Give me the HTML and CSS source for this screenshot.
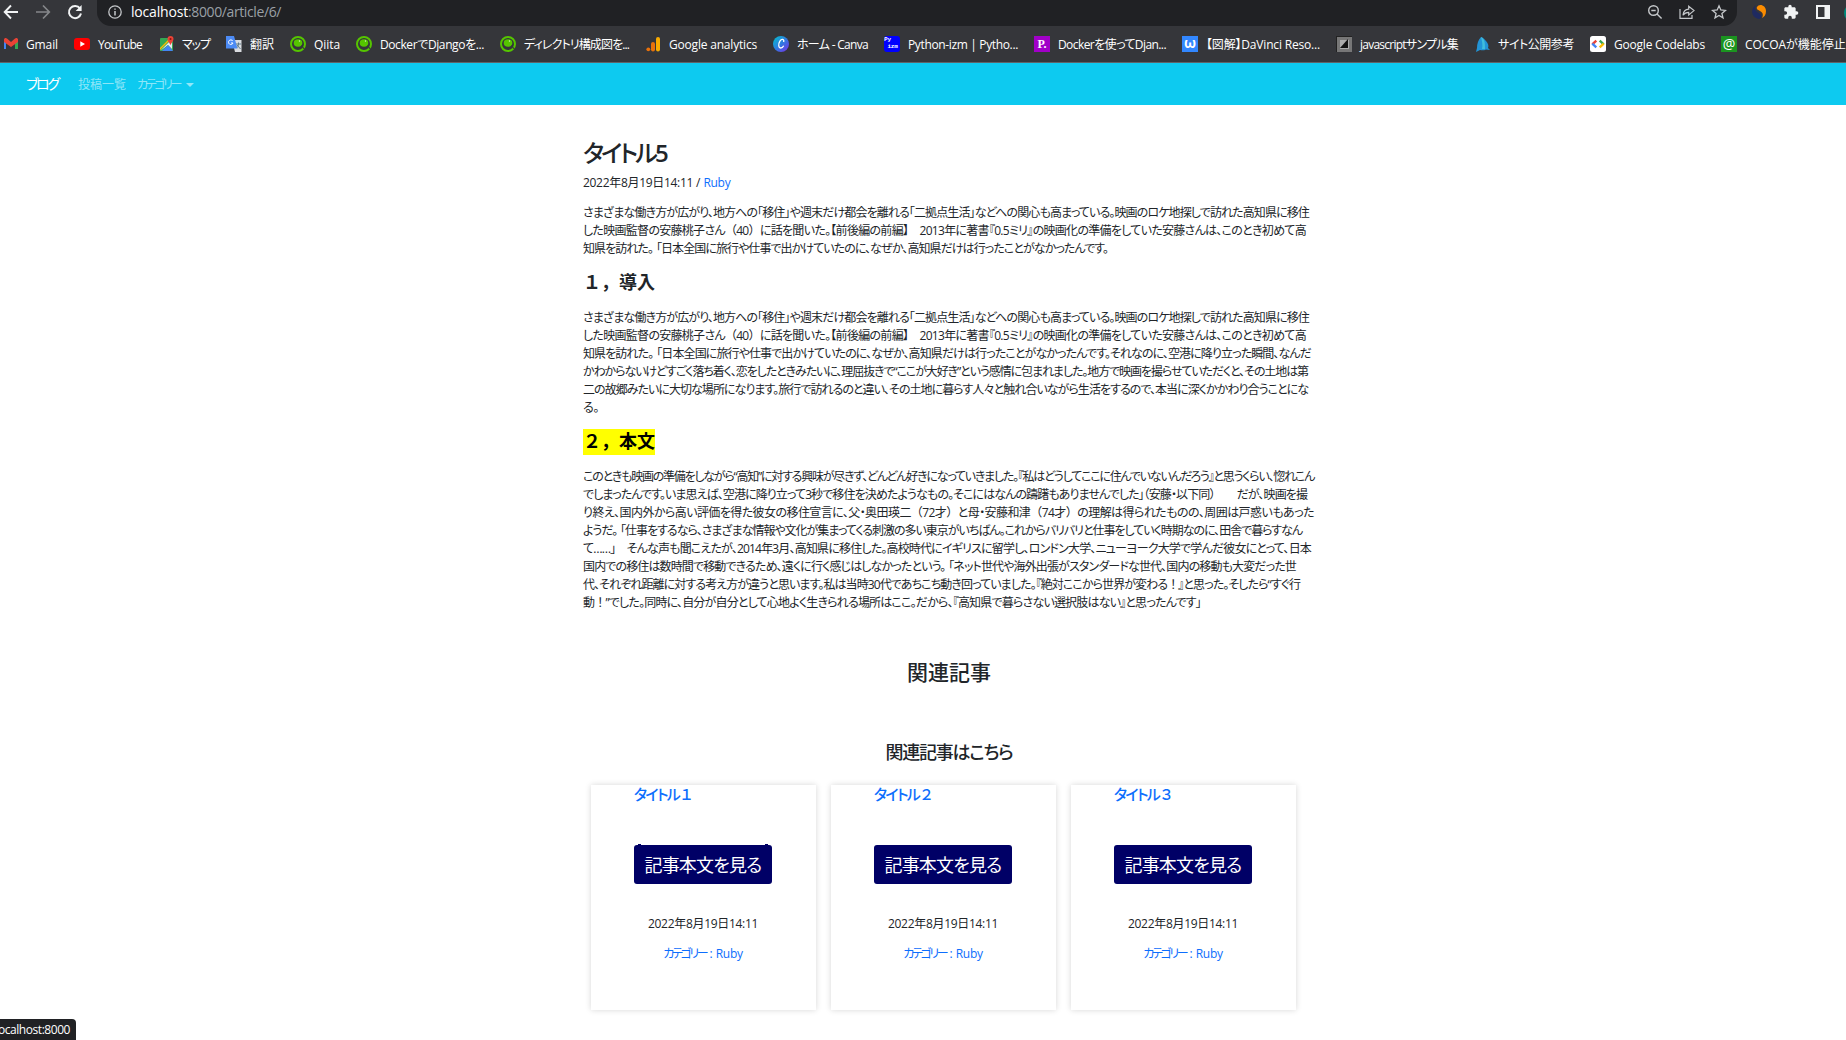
FILE: index.html
```html
<!DOCTYPE html>
<html lang="ja">
<head>
    <meta charset="UTF-8">
    <meta name="viewport" content="width=device-width, initial-scale=1.0">
    <title>タイトル5</title>
    <link rel="stylesheet" href="styles.css">
</head>
<body>
    <header class="browser">
        <div class="toolbar">
            <div class="nav-buttons">
                <svg width="16" height="16" viewBox="0 0 16 16" fill="none" stroke="#f1f3f4" stroke-width="1.9"><path d="M15 8H2M8 1.5L1.7 8L8 14.5"/></svg>
                <svg width="16" height="16" viewBox="0 0 16 16" fill="none" stroke="#85878a" stroke-width="1.7"><path d="M1 8h13M8 1.5L14.3 8L8 14.5"/></svg>
                <svg width="16" height="16" viewBox="0 0 16 16"><path d="M13 4.4A6.1 6.1 0 1 0 14 9.5" fill="none" stroke="#f1f3f4" stroke-width="2"/><path d="M14.6 1v6H8.6z" fill="#f1f3f4"/></svg>
            </div>
            <div class="omnibox">
                <svg width="14" height="14" viewBox="0 0 14 14" fill="none" stroke="#c4c7ca" stroke-width="1.3"><circle cx="7" cy="7" r="6.2"/><path d="M7 6v4.4M7 3.4v1.4" stroke-width="1.5"/></svg>
                <div class="url"><span class="host" data-w="57">localhost</span><span data-w="93">:8000/article/6/</span></div>
                <div class="omnibox-icons">
                    <svg width="16" height="16" viewBox="0 0 16 16" fill="none" stroke="#c4c7ca" stroke-width="1.4"><circle cx="6.5" cy="6.5" r="4.8"/><path d="M10 10l4.6 4.6M4.3 6.5h4.4"/></svg>
                    <svg width="16" height="16" viewBox="0 0 16 16" fill="none" stroke="#c4c7ca" stroke-width="1.2"><path d="M1 5v9.4h12V11"/><path d="M4 11.2C4.4 7.500 6.500 5.400 9.700 5.200V2.200L15 6.600L9.700 11V8.300C7.200 8.300 5.400 9.200 4 11.200z"/></svg>
                    <svg width="16" height="16" viewBox="0 0 16 16" fill="none" stroke="#c4c7ca" stroke-width="1.3"><path d="M8 1.8l1.800 4.200 4.600.4-3.500 3 1.100 4.500L8 11.500l-4 2.400 1.100-4.500-3.500-3 4.600-.4z"/></svg>
                </div>
            </div>
            <div class="extensions">
                <svg width="16" height="16" viewBox="0 0 16 16"><path d="M5 1C-1 5 0 14 8 15c3-1 3-4 0-6C4 7 3 4 5 1z" fill="#1f2a60"/><path d="M6 3c2-4 9-2 9 4 0 4-2 6-4 7 2-4 0-6-2-7S5 5 6 3z" fill="#fb8c00"/></svg>
                <svg width="16" height="16" viewBox="0 0 24 24" fill="#f1f3f4"><path d="M20.500 11H19V7c0-1.100-.9-2-2-2h-4V3.500a2.500 2.500 0 0 0-5 0V5H4c-1.100 0-2 .9-2 2v3.800h1.500a2.700 2.700 0 0 1 0 5.400H2V20c0 1.100.9 2 2 2h3.800v-1.500a2.700 2.700 0 0 1 5.400 0V22H17c1.100 0 2-.9 2-2v-4h1.500a2.500 2.500 0 0 0 0-5z"/></svg>
                <svg width="16" height="16" viewBox="0 0 16 16"><path d="M1 1h14v14H1z" fill="#f1f3f4"/><path d="M3 3h6.500v10H3z" fill="#35363a"/></svg>
                <span class="avatar"></span>
            </div>
        </div>
        <nav class="bookmarks">
            <a class="bookmark">
                <svg width="16" height="16" viewBox="0 0 16 16"><path d="M2 3l2 1v9H2z" fill="#4285f4"/><path d="M14 13h2V3l-3 1v9z" fill="#34a853"/><path d="M2 6V3.500C2 2 4 1.500 5 2.500L9 6l4-3.500c1-1 3-.5 3 1V6L9 11z" fill="#ea4335"/></svg>
                <span data-w="32">Gmail</span>
            </a>
            <a class="bookmark">
                <svg width="16" height="16" viewBox="0 0 16 16"><rect y="2" width="16" height="12" rx="3" fill="#f00"/><path d="M6.300 5.300v5.400L11 8z" fill="#fff"/></svg>
                <span data-w="44">YouTube</span>
            </a>
            <a class="bookmark">
                <svg width="16" height="16" viewBox="0 0 16 16"><rect x="2" y="2" width="13" height="13" rx="1" fill="#34a853"/><path d="M2 15L14 3v10l-4-4z" fill="#e8eaed"/><path d="M4 15l6-6 5 6z" fill="#4285f4"/><path d="M2 12L12 2h2L2 14z" fill="#fbbc04"/><path d="M12.500 9C11 6 9.500 5 9.500 3a3 3 0 0 1 6 0c0 2-1.500 3-3 6z" fill="#ea4335"/><circle cx="12.500" cy="3" r="1" fill="#811"/></svg>
                <span data-w="28">マップ</span>
            </a>
            <a class="bookmark">
                <svg width="16" height="16" viewBox="0 0 16 16"><path d="M6 4h9.500v12H9z" fill="#dadce0"/><path d="M0 0h8l3.500 12.500H0z" fill="#4c8bf5"/><path d="M6.800 5A2.300 2.300 0 1 0 7 7H5" fill="none" stroke="#fff"/><path d="M10 8h5M12.500 6.500V8c0 2-1 3.500-1 3.500M11 9l3.500 4" stroke="#607d8b" fill="none"/></svg>
                <span data-w="24">翻訳</span>
            </a>
            <a class="bookmark">
                <svg width="16" height="16" viewBox="0 0 16 16"><circle cx="8" cy="8" r="7" fill="#35363a" stroke="#55c500" stroke-width="2"/><ellipse cx="8" cy="7" rx="4.300" ry="3.700" fill="#55c500"/><path d="M11.500 9.500l3.500 4.500" stroke="#35363a" stroke-width="1.200"/><circle cx="9.500" cy="5" r=".7" fill="#d8f5c0"/></svg>
                <span data-w="26">Qiita</span>
            </a>
            <a class="bookmark">
                <svg width="16" height="16" viewBox="0 0 16 16"><circle cx="8" cy="8" r="7" fill="#35363a" stroke="#55c500" stroke-width="2"/><ellipse cx="8" cy="7" rx="4.300" ry="3.700" fill="#55c500"/><path d="M11.500 9.500l3.500 4.500" stroke="#35363a" stroke-width="1.200"/><circle cx="9.500" cy="5" r=".7" fill="#d8f5c0"/></svg>
                <span data-w="104">DockerでDjangoを...</span>
            </a>
            <a class="bookmark">
                <svg width="16" height="16" viewBox="0 0 16 16"><circle cx="8" cy="8" r="7" fill="#35363a" stroke="#55c500" stroke-width="2"/><ellipse cx="8" cy="7" rx="4.300" ry="3.700" fill="#55c500"/><path d="M11.500 9.500l3.500 4.500" stroke="#35363a" stroke-width="1.200"/><circle cx="9.500" cy="5" r=".7" fill="#d8f5c0"/></svg>
                <span data-w="105">ディレクトリ構成図を...</span>
            </a>
            <a class="bookmark">
                <svg width="16" height="16" viewBox="0 0 16 16"><circle cx="3.300" cy="13.300" r="1.900" fill="#e8710a"/><rect x="6" y="6" width="4" height="9.500" rx="2" fill="#e8710a"/><rect x="11" y="1" width="4" height="14.500" rx="2" fill="#f9ab00"/></svg>
                <span data-w="88">Google analytics</span>
            </a>
            <a class="bookmark">
                <svg width="16" height="16" viewBox="0 0 16 16"><defs><linearGradient id="canva" x1="0" y1="0" x2="1" y2="1"><stop offset="0" stop-color="#00c4cc"/><stop offset=".5" stop-color="#2f7be0"/><stop offset="1" stop-color="#7d2ae8"/></linearGradient></defs><circle cx="8" cy="8" r="8" fill="url(#canva)"/><path d="M10.600 6c1-3-2-3.500-3.700-.8-2 3.300-1.300 6.800.8 6.800 1.300 0 2.300-1 3-2.300" fill="none" stroke="#fff" stroke-width="1.300"/></svg>
                <span data-w="71">ホーム - Canva</span>
            </a>
            <a class="bookmark">
                <span class="favicon favicon-py">Py<br>&nbsp;izm</span>
                <span data-w="110">Python-izm | Pytho...</span>
            </a>
            <a class="bookmark">
                <span class="favicon favicon-p">P.</span>
                <span data-w="108">Dockerを使ってDjan...</span>
            </a>
            <a class="bookmark">
                <span class="favicon favicon-w">ω</span>
                <span data-w="114">【図解】DaVinci Reso...</span>
            </a>
            <a class="bookmark">
                <svg width="16" height="16" viewBox="0 0 16 16"><path d="M0 0h16v16H0z" fill="#222"/><path d="M1 1h15v15H1z" fill="#777"/><path d="M4 4h9v9H4z" fill="#aaa"/><path d="M12 3v9H4z" fill="#111"/></svg>
                <span data-w="98">javascriptサンプル集</span>
            </a>
            <a class="bookmark">
                <svg width="16" height="16" viewBox="0 0 16 16"><path d="M7 1c3 1 3 2 5 4s3 5 2 7l2 2-4-.5c-2 1-4 1-6 .5l-4 2 1-4c0-4 1-8 4-11z" fill="#2294d6"/><path d="M7 1c4 2 4 6 4 12H8c1-4 0-8-1-12z" fill="#40bddb"/></svg>
                <span data-w="76">サイト公開参考</span>
            </a>
            <a class="bookmark">
                <svg width="16" height="16" viewBox="0 0 16 16"><rect width="16" height="16" rx="2.500" fill="#fff"/><g fill="none" stroke-width="2.400"><path d="M6.300 4.700L2.300 8.300" stroke="#ea4335"/><path d="M2.300 7.700L6.300 11.300" stroke="#4285f4"/><path d="M9.700 4.700l4 3.600" stroke="#34a853"/><path d="M13.700 7.700l-4 3.600" stroke="#fbbc04"/></g></svg>
                <span data-w="91">Google Codelabs</span>
            </a>
            <a class="bookmark">
                <span class="favicon favicon-at">@</span>
                <span data-w="110">COCOAが機能停止...</span>
            </a>
        </nav>
    </header>

    <nav class="navbar">
        <a class="navbar-brand" data-w="32">ブログ</a>
        <a class="nav-link" data-w="48">投稿一覧</a>
        <a class="nav-link dropdown-toggle"><span data-w="43">カテゴリー</span></a>
    </nav>

    <main class="container">
        <article>
            <h2><span data-w="72">タイトル</span><span class="num" data-w="14">5</span></h2>
            <div class="meta"><span data-w="110">2022年8月19日14:11</span><span class="slash">/</span><a data-w="27">Ruby</a></div>
            <p>
                <span class="line" data-w="726">さまざまな働き方が広がり、地方への「移住」や週末だけ都会を離れる「二拠点生活」などへの関心も高まっている。映画のロケ地探しで訪れた高知県に移住</span>
                <span class="line" data-w="723">した映画監督の安藤桃子さん<span class="full">（</span>40<span class="full">）</span>に話を聞いた。【前後編の前編】　2013年に著書『0.5ミリ』の映画化の準備をしていた安藤さんは、このとき初めて高</span>
                <span class="line" data-w="525">知県を訪れた。<span class="open">「</span>日本全国に旅行や仕事で出かけていたのに、なぜか、高知県だけは行ったことがなかったんです。</span>
            </p>
            <p class="heading"><span data-w="72">１，導入</span></p>
            <p>
                <span class="line" data-w="726">さまざまな働き方が広がり、地方への「移住」や週末だけ都会を離れる「二拠点生活」などへの関心も高まっている。映画のロケ地探しで訪れた高知県に移住</span>
                <span class="line" data-w="723">した映画監督の安藤桃子さん<span class="full">（</span>40<span class="full">）</span>に話を聞いた。【前後編の前編】　2013年に著書『0.5ミリ』の映画化の準備をしていた安藤さんは、このとき初めて高</span>
                <span class="line" data-w="728">知県を訪れた。<span class="open">「</span>日本全国に旅行や仕事で出かけていたのに、なぜか、高知県だけは行ったことがなかったんです。それなのに、空港に降り立った瞬間、なんだ</span>
                <span class="line" data-w="725">かわからないけどすごく落ち着く、恋をしたときみたいに、理屈抜きで“ここが大好き”という感情に包まれました。地方で映画を撮らせていただくと、その土地は第</span>
                <span class="line" data-w="725">二の故郷みたいに大切な場所になります。旅行で訪れるのと違い、その土地に暮らす人々と触れ合いながら生活をするので、本当に深くかかわり合うことにな</span>
                <span class="line" data-w="16">る。</span>
            </p>
            <p class="heading"><mark data-w="72">２，本文</mark></p>
            <p>
                <span class="line" data-w="731">このときも映画の準備をしながら“高知”に対する興味が尽きず、どんどん好きになっていきました。『私はどうしてここに住んでいないんだろう』と思うくらい、惚れこん</span>
                <span class="line" data-w="724">でしまったんです。いま思えば、空港に降り立って3秒で移住を決めたようなもの。そこにはなんの躊躇もありませんでした」<span class="full">（</span>安藤・以下同<span class="full">）</span>　　だが、映画を撮</span>
                <span class="line" data-w="731">り終え、国内外から高い評価を得た彼女の移住宣言に、父・奥田瑛二<span class="full">（</span>72才<span class="full">）</span>と母・安藤和津<span class="full">（</span>74才<span class="full">）</span>の理解は得られたものの、周囲は戸惑いもあった</span>
                <span class="line" data-w="719">ようだ。<span class="open">「</span>仕事をするなら、さまざまな情報や文化が集まってくる刺激の多い東京がいちばん。これからバリバリと仕事をしていく時期なのに、田舎で暮らすなん</span>
                <span class="line" data-w="728">て……」　そんな声も聞こえたが、2014年3月、高知県に移住した。高校時代にイギリスに留学し、ロンドン大学、ニューヨーク大学で学んだ彼女にとって、日本</span>
                <span class="line" data-w="713">国内での移住は数時間で移動できるため、遠くに行く感じはしなかったという。<span class="open">「</span>ネット世代や海外出張がスタンダードな世代、国内の移動も大変だった世</span>
                <span class="line" data-w="717">代、それぞれ距離に対する考え方が違うと思います。私は当時30代であちこち動き回っていました。『絶対ここから世界が変わる<span class="full">！</span>』と思った。そしたら“すぐ行</span>
                <span class="line" data-w="618">動<span class="full">！</span>”でした。同時に、自分が自分として心地よく生きられる場所はここ。だから、『高知県で暮らさない選択肢はない』と思ったんです」</span>
            </p>
        </article>

        <section class="related">
            <h3><span data-w="84">関連記事</span></h3>
            <h4><span data-w="127">関連記事はこちら</span></h4>
            <div class="cards">
                <div class="card first">
                    <h5><a><span data-w="45">タイトル</span><span class="full">１</span></a></h5>
                    <a class="btn"><span data-w="117">記事本文を見る</span></a>
                    <p><span data-w="110">2022年8月19日14:11</span></p>
                    <p><a><span data-w="43">カテゴリー</span> : <span data-w="27">Ruby</span></a></p>
                </div>
                <div class="card">
                    <h5><a><span data-w="45">タイトル</span><span class="full">２</span></a></h5>
                    <a class="btn"><span data-w="117">記事本文を見る</span></a>
                    <p><span data-w="110">2022年8月19日14:11</span></p>
                    <p><a><span data-w="43">カテゴリー</span> : <span data-w="27">Ruby</span></a></p>
                </div>
                <div class="card">
                    <h5><a><span data-w="45">タイトル</span><span class="full">３</span></a></h5>
                    <a class="btn"><span data-w="117">記事本文を見る</span></a>
                    <p><span data-w="110">2022年8月19日14:11</span></p>
                    <p><a><span data-w="43">カテゴリー</span> : <span data-w="27">Ruby</span></a></p>
                </div>
            </div>
        </section>
    </main>

    <div class="status"><span data-w="72">ocalhost:8000</span></div>

    <script src="script.js"></script>
</body>
</html>
```

FILE: styles.css
```css
* {
    box-sizing: border-box;
}

body {
    margin: 0;
    height: 1040px;
    overflow: hidden;
    background-color: #fff;
    color: #212529;
    font-family: "Open Sans", "Noto Sans CJK JP", sans-serif;
    font-size: 12px;
    line-height: 18px;
    font-feature-settings: "palt";
}

a {
    color: #0d6efd;
    text-decoration: none;
}

svg {
    display: block;
    flex: none;
}

[data-w] {
    display: inline-block;
    white-space: nowrap;
}

h2, h3, h4, h5, p {
    margin: 0;
    font-weight: 500;
}

/* browser bars */
.browser {
    height: 63px;
    background-color: #35363a;
    border-bottom: 1px solid #5f6368;
    overflow: hidden;
}

.toolbar {
    display: flex;
    height: 26px;
}

.nav-buttons {
    display: flex;
    flex: none;
    gap: 16px;
    width: 97px;
    padding: 4px 0 0 3px;
}

.omnibox {
    display: flex;
    flex: none;
    align-items: center;
    width: 1640px;
    height: 26px;
    padding: 0 10px 2px 11px;
    background-color: #202124;
    border-radius: 0 0 14px 14px;
}

.url {
    margin-left: 9px;
    color: #9aa0a6;
    font-size: 14px;
}

.host {
    color: #fff;
}

.omnibox-icons {
    display: flex;
    gap: 16px;
    margin-left: auto;
}

.extensions {
    display: flex;
    flex: none;
    gap: 16px;
    padding: 4px 0 0 14px;
}

.avatar {
    flex: none;
    width: 18px;
    height: 18px;
    margin-left: -3px;
    border-radius: 50%;
    background-color: #00897b;
}

.bookmarks {
    display: flex;
    gap: 16px;
    padding: 10px 0 0 2px;
}

.bookmark {
    display: flex;
    align-items: center;
    flex: none;
    gap: 8px;
    height: 16px;
    color: #fff;
}

.bookmark [data-w] {
    padding-top: 2px;
}

.favicon {
    width: 16px;
    height: 16px;
    overflow: hidden;
    text-align: center;
    color: #fff;
    font-weight: bold;
}

.favicon-py {
    border-radius: 3px;
    background-color: #00f;
    font-family: "Liberation Mono", monospace;
    font-size: 6px;
    line-height: 7px;
    text-align: left;
    letter-spacing: -0.2px;
}

.favicon-p {
    background-color: #a100c8;
    font-family: "Liberation Serif", serif;
    font-size: 12px;
    line-height: 16px;
}

.favicon-w {
    background-color: #3287ff;
    font-size: 14px;
    line-height: 14px;
}

.favicon-at {
    background-color: #1b9420;
    font-size: 14px;
    font-weight: 400;
    line-height: 15px;
}

/* site navbar */
.navbar {
    display: flex;
    align-items: center;
    height: 42px;
    padding-left: 26px;
    background-color: #0dcaf0;
}

.navbar-brand {
    margin-right: 20px;
    color: #fff;
    font-size: 14px;
}

.nav-link {
    margin-right: 11px;
    padding-top: 2px;
    color: rgba(255, 255, 255, 0.55);
}

.dropdown-toggle {
    display: flex;
    align-items: center;
}

.dropdown-toggle::after {
    content: "";
    margin-left: 6px;
    border-top: 4px solid;
    border-left: 4px solid transparent;
    border-right: 4px solid transparent;
}

/* article */
.container {
    width: 732px;
    margin-left: 583px;
    padding-top: 33px;
}

h2 {
    font-size: 24px;
    line-height: 29px;
    height: 29px;
    margin-bottom: 7px;
}

.num {
    font-weight: 600;
}

.meta {
    display: flex;
    margin-bottom: 12px;
}

.slash {
    margin: 0 3px;
}

article p {
    margin-bottom: 12px;
    font-weight: 400;
}

.line {
    display: block;
    width: max-content;
}

/* full-width brackets and marks keep their whole box */
.full {
    font-feature-settings: normal;
}

.open {
    margin-left: 3px;
}

article .heading {
    height: 27px;
    font-size: 18px;
    line-height: 25px;
    font-weight: 700;
    font-feature-settings: normal;
}

mark {
    height: 26px;
    line-height: 25px;
    background-color: #ff0;
    color: #000;
}

/* related posts */
.related {
    padding-top: 36px;
    text-align: center;
}

h3 {
    font-size: 21px;
    line-height: 25px;
    margin-bottom: 56px;
}

h4 {
    font-size: 18px;
    line-height: 22px;
    margin-bottom: 22px;
}

.cards {
    display: flex;
    gap: 15px;
    padding-left: 8px;
}

.card {
    flex: none;
    width: 225px;
    height: 225px;
    background-color: #fff;
    box-shadow: 0 0 6px rgba(0, 0, 0, 0.16);
}

h5 {
    height: 18px;
    margin-bottom: 42px;
    padding-left: 43px;
    font-size: 15px;
    line-height: 19px;
    text-align: left;
}

.btn {
    display: block;
    position: relative;
    width: 138px;
    height: 39px;
    margin: 0 0 31px 43px;
    border-radius: 3px;
    background-color: #006;
    color: #fff;
    font-size: 18px;
    line-height: 40px;
}

.first .btn::before,
.first .btn::after {
    content: "";
    position: absolute;
    top: -1px;
    left: 4px;
    width: 3px;
    height: 1px;
    background-color: #006;
}

.first .btn::after {
    left: 131px;
}

.card p {
    height: 18px;
    margin-bottom: 12px;
    padding-right: 1px;
    font-weight: 400;
}

/* link preview in the corner */
.status {
    position: absolute;
    left: 0;
    bottom: 0;
    width: 76px;
    height: 21px;
    overflow: hidden;
    border-radius: 0 4px 0 0;
    background-color: #202124;
    color: #fff;
    line-height: 22px;
}

.status span {
    margin-left: -2px;
}
```

FILE: script.js
```js
// Track each label so that it takes up the width given in data-w
document.querySelectorAll('[data-w]').forEach(function(el) {
    const target = parseFloat(el.dataset.w);
    const natural = el.getBoundingClientRect().width;
    const spacing = (target - natural) / el.textContent.length;
    el.style.letterSpacing = spacing.toFixed(3) + 'px';
});
```
